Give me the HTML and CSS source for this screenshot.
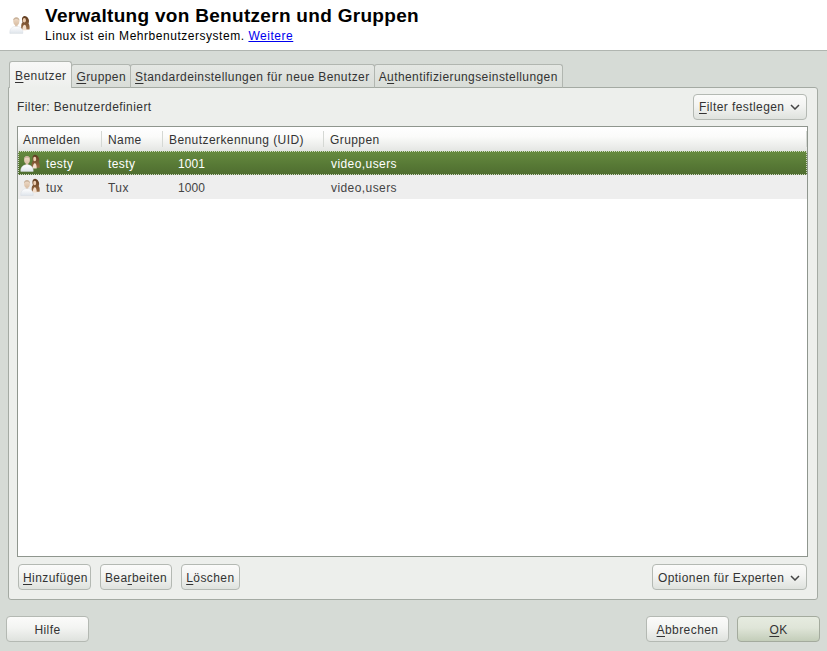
FILE: index.html
```html
<!DOCTYPE html>
<html lang="de">
<head>
<meta charset="utf-8">
<title>Verwaltung von Benutzern und Gruppen</title>
<link rel="stylesheet" href="styles.css">
</head>
<body>
<svg class="defs" width="0" height="0" aria-hidden="true">
  <defs>
    <linearGradient id="skinA" x1="0" y1="0" x2="0" y2="1"><stop offset="0" stop-color="#f3dfcb"/><stop offset="1" stop-color="#d8bda3"/></linearGradient>
    <linearGradient id="shirt" x1="0" y1="0" x2="0" y2="1"><stop offset="0" stop-color="#ffffff"/><stop offset="1" stop-color="#dfe5ec"/></linearGradient>
    <linearGradient id="hair" x1="0" y1="0" x2="0" y2="1"><stop offset="0" stop-color="#5e3a1e"/><stop offset="1" stop-color="#9a6c44"/></linearGradient>
    <symbol id="users" viewBox="0 0 22 18">
      <path d="M15.200 .8c-1.800 0-2.800 1.400-2.800 3.100 0 1.200.2 2.200.6 3-.8.700-1.200 1.700-1.300 2.900l-.1 3.900h8c.3-1.700.2-4-.9-5.600.5-1 .6-2.500.2-3.800-.4-1.200-1.800-3.500-3.700-3.500z" fill="url(#hair)"/>
      <ellipse cx="14.700" cy="5" rx="1.500" ry="2.200" fill="#edcdb0"/>
      <path d="M12.700 14.500c.1-2.500.7-5.200 2.300-5.200 1.200 0 1.700 2.700 1.700 5.200z" fill="#f4dfcc"/>
      <ellipse cx="7" cy="6" rx="2.900" ry="3.700" fill="url(#skinA)"/>
      <path d="M4 5.500c-.2-2.300 1.300-3.500 3-3.500s3.200 1.200 3 3.500c-.8-1.300-1.900-1.700-3-1.700s-2.200.4-3 1.700z" fill="#c9b39c"/>
      <path d="M5.800 9h2.400v2.200H5.800z" fill="#dcc2a9"/>
      <path d="M.8 17.500c-.4-3.600 1.400-6.200 5-6.700h2.400c3.600.5 5.400 3.100 5 6.700z" fill="url(#shirt)" stroke="#d3d9e0" stroke-width=".4"/>
    </symbol>
  </defs>
</svg>
<header class="banner">
  <svg class="banner-icon"><use href="#users"/></svg>
  <div class="banner-text">
    <h1>Verwaltung von Benutzern und Gruppen</h1>
    <p>Linux ist ein Mehrbenutzersystem. <a href="#">Weitere</a></p>
  </div>
</header>
<main class="content">
  <nav class="tabs">
    <span class="tab active"><u>B</u>enutzer</span>
    <span class="tab"><u>G</u>ruppen</span>
    <span class="tab"><u>S</u>tandardeinstellungen für neue Benutzer</span>
    <span class="tab">A<u>u</u>thentifizierungseinstellungen</span>
  </nav>
  <section class="panel">
    <div class="filter-row">
      <span>Filter: Benutzerdefiniert</span>
      <button class="btn menu filter-btn"><span><u>F</u>ilter festlegen</span><svg class="chev" viewBox="0 0 10 6"><path d="M1 1l4 4 4-4"/></svg></button>
    </div>
    <div class="table">
      <div class="row head">
        <span class="cell">Anmelden</span>
        <span class="cell">Name</span>
        <span class="cell">Benutzerkennung (UID)</span>
        <span class="cell">Gruppen</span>
      </div>
      <div class="row item selected">
        <span class="cell login"><svg class="row-icon"><use href="#users"/></svg>testy</span>
        <span class="cell">testy</span>
        <span class="cell uid">1001</span>
        <span class="cell">video,users</span>
      </div>
      <div class="row item alt">
        <span class="cell login"><svg class="row-icon"><use href="#users"/></svg>tux</span>
        <span class="cell">Tux</span>
        <span class="cell uid">1000</span>
        <span class="cell">video,users</span>
      </div>
    </div>
    <div class="actions">
      <button class="btn add-btn"><u>H</u>inzufügen</button>
      <button class="btn">Bea<u>r</u>beiten</button>
      <button class="btn"><u>L</u>öschen</button>
      <button class="btn menu expert-btn"><span>Optionen für Experten</span><svg class="chev" viewBox="0 0 10 6"><path d="M1 1l4 4 4-4"/></svg></button>
    </div>
  </section>
</main>
<footer class="footer">
  <button class="btn wide">Hilfe</button>
  <div class="footer-right">
    <button class="btn wide"><u>A</u>bbrechen</button>
    <button class="btn wide primary"><u>O</u>K</button>
  </div>
</footer>
</body>
</html>
```
FILE: styles.css
```css
* { box-sizing: border-box; }
html, body { margin: 0; height: 100%; }
body {
  width: 827px;
  height: 651px;
  overflow: hidden;
  background: #d6dbd6;
  color: #333;
  font: 12px "Liberation Sans", Arial, sans-serif;
  letter-spacing: .42px;
  display: flex;
  flex-direction: column;
}
.defs { position: absolute; }
u { text-underline-offset: 2px; }

.banner {
  height: 51px;
  background: #fff;
  border-bottom: 1px solid #b0b5b0;
  display: flex;
  padding: 5px 0 0 9px;
}
.banner-icon { width: 23px; height: 19px; margin-top: 10px; }
.banner-text { margin-left: 13px; color: #000; }
h1 { margin: 0; font-size: 19px; line-height: 22px; font-weight: bold; letter-spacing: .3px; }
.banner-text p { margin: 2px 0 0; line-height: 15px; letter-spacing: .53px; }
.banner-text a { color: #0000ee; }

.content { padding: 11px 9px 0 8px; }
.tabs { display: flex; padding-left: 1px; height: 26px; align-items: flex-end; position: relative; z-index: 1; margin-bottom: -1px; }
.tab {
  height: 24px;
  padding: 5px 4px 0;
  margin-right: -1px;
  background: linear-gradient(#e4e7e3, #d9ddd8);
  border: 1px solid #b1b6b0;
  border-bottom-color: #a4aaa3;
  border-radius: 3px 3px 0 0;
  white-space: nowrap;
}
.tab.active {
  height: 27px;
  padding: 7px 5px 0;
  background: linear-gradient(#f8f8f7, #edefec);
  border-bottom: 0;
  margin-right: -1px;
  position: relative;
  z-index: 1;
}
.panel {
  height: 513px;
  background: #edefec;
  border: 1px solid #a4aaa3;
  border-radius: 0 3px 3px 3px;
  padding: 5px 9px 9px 8px;
  display: flex;
  flex-direction: column;
}
.filter-row { height: 27px; display: flex; justify-content: space-between; align-items: center; padding-right: 1px; margin-bottom: 6px; }

.table { flex: 1; background: #fff; border: 1px solid #8f968e; display: flex; flex-direction: column; }
.row { display: grid; grid-template-columns: 84px 61px 161px 1fr; height: 24px; align-items: center; }
.cell { padding: 1px 0 0 5px; white-space: nowrap; display: flex; align-items: center; height: 100%; }
.row .cell:nth-child(2),
.row .cell:nth-child(3),
.row .cell:nth-child(4) { padding-left: 6px; }
.head { background: linear-gradient(#ffffff, #fbfbfa 40%, #e4e6e3); }
.head .cell { position: relative; }
.head .cell::after { content: ""; position: absolute; right: 0; top: 4px; bottom: 4px; width: 1px; background: #d5d8d4; }
.item { color: #444; }
.item .cell:nth-child(4) { padding-left: 7px; }
.selected { color: #fff; background: linear-gradient(#678b40, #587a36 55%, #4f6d30); outline: 1px dotted #cfd8c4; outline-offset: -1px; }
.alt { background: #eeeeee; }
.login { padding-left: 2px !important; }
.row-icon { width: 22px; height: 18px; margin: -1px 4px 0 0; flex: none; }
.uid { padding-left: 15px !important; letter-spacing: .1px; }

.actions { display: flex; gap: 9px; margin-top: 7px; padding: 0 1px; }
.btn {
  height: 26px;
  padding: 1px 4px 0;
  background: linear-gradient(#fbfbfa, #f3f4f2 45%, #dfe2de);
  border: 1px solid #b4b9b3;
  border-radius: 4px;
  color: #333;
  font: inherit;
  letter-spacing: inherit;
  white-space: nowrap;
}
.add-btn { padding-right: 2px; }
.menu { display: flex; align-items: center; justify-content: space-between; }
.filter-btn { width: 114px; padding: 1px 6px 0 5px; }
.expert-btn { width: 155px; margin-left: auto; padding: 1px 6px 0 5px; }
.chev { width: 10px; height: 6px; fill: none; stroke: #444; stroke-width: 1.500; }

.footer { display: flex; justify-content: space-between; padding: 16px 7px 0 6px; }
.footer-right { display: flex; gap: 8px; }
.wide { width: 83px; }
.primary { background: linear-gradient(#e6ebe0, #dfe5d8 45%, #c3cdb9); border-color: #a4ab9e; }
```
